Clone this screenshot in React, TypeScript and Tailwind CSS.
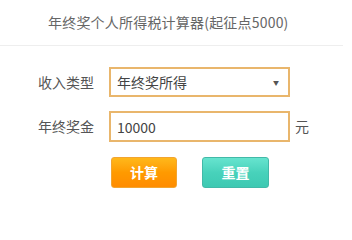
export default function App() {
  const font = { fontFamily: '"Noto Sans CJK SC", "Liberation Sans", sans-serif' };

  return (
    <div className="w-[352px] h-[218px] bg-white" style={font}>
      <div className="w-[343px] h-[46px] border-b border-[#eeeeee] flex items-center pl-[48px] text-[14px] text-[#666666] tracking-[0.2px]">
        年终奖个人所得税计算器(起征点5000)
      </div>

      <div className="pl-[38px] pt-[21px] text-[14px]">
        <div className="flex items-center h-[30px]">
          <span className="w-[71px] text-[#555555]">收入类型</span>
          <div className="w-[181px] h-[30px] border-2 border-[#e9b66c] flex items-center justify-between pl-[6px] pr-[9px] text-[#444444]">
            <span>年终奖所得</span>
            <span className="text-[6px] text-[#555555]">▼</span>
          </div>
        </div>

        <div className="flex items-center h-[31px] mt-[14px]">
          <span className="w-[71px] text-[#555555]">年终奖金</span>
          <input
            className="w-[181px] h-[31px] border-2 border-[#e9b66c] pl-[6px] text-[#444444] outline-none"
            defaultValue="10000"
          />
          <span className="ml-[5px] text-[#555555]">元</span>
        </div>

        <div className="flex mt-[15px] ml-[73px] gap-[25px]">
          <button className="w-[66px] h-[31px] rounded-[3px] border border-[#f2a531] bg-gradient-to-b from-[#ffb81a] via-[#ff9a00] to-[#ff8c00] text-white text-[14px] font-semibold">
            计算
          </button>
          <button className="w-[67px] h-[31px] rounded-[3px] border border-[#42b9a8] bg-gradient-to-b from-[#66e4cf] via-[#48d2bb] to-[#3dc9b2] text-white text-[14px] font-semibold">
            重置
          </button>
        </div>
      </div>
    </div>
  );
}
